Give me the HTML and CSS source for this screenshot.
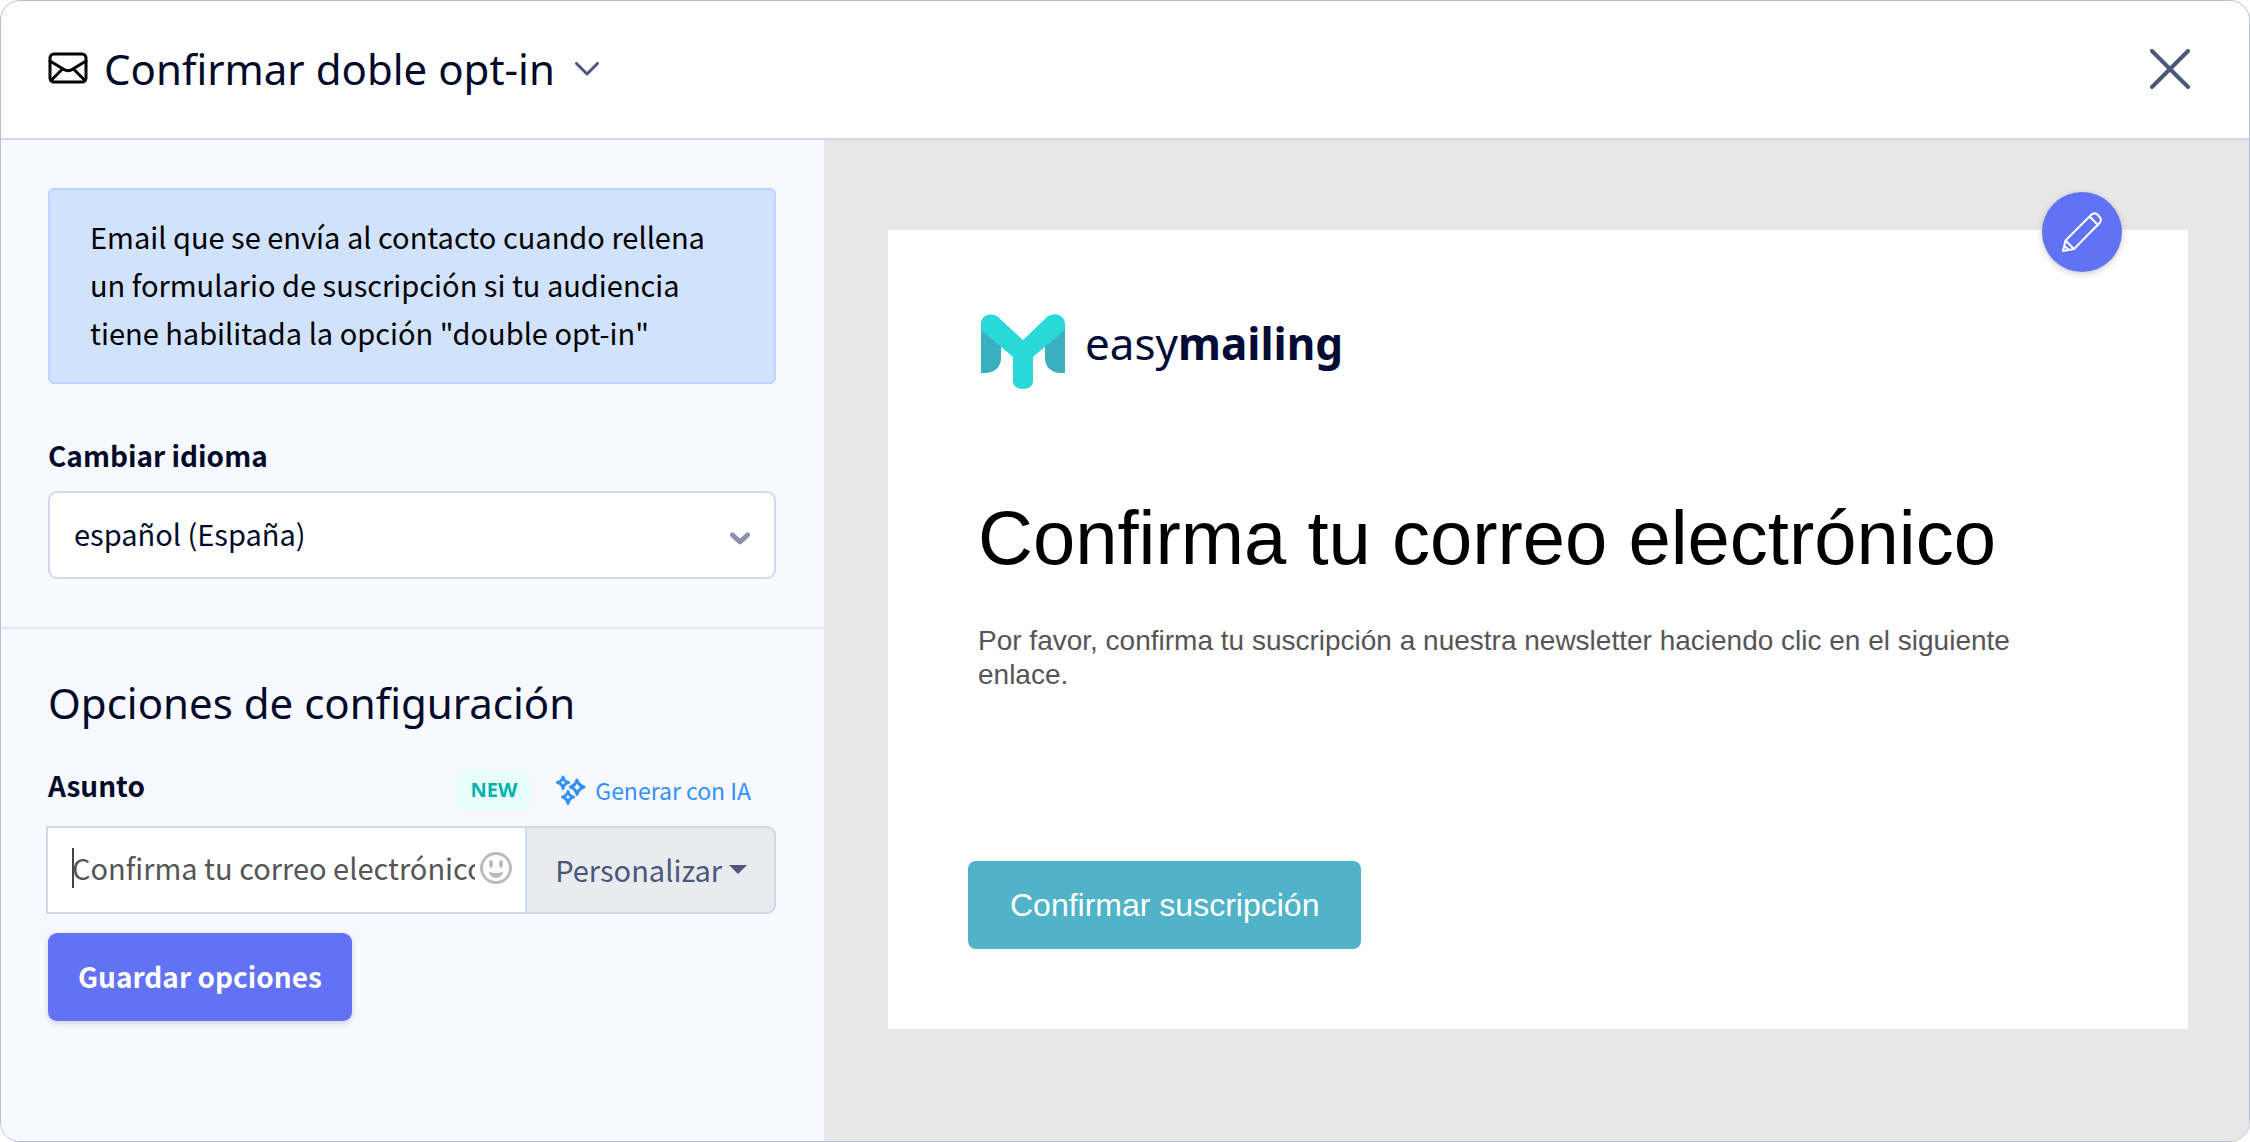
FILE: index.html
```html
<!DOCTYPE html>
<html lang="es">
<head>
<meta charset="utf-8">
<meta name="viewport" content="width=device-width, initial-scale=1">
<title>Confirmar doble opt-in</title>
<link rel="stylesheet" href="styles.css">
</head>
<body>
<div class="editor">
  <header class="topbar">
    <button class="title-menu" type="button" aria-haspopup="true">
      <svg class="icon-mail" viewBox="0 0 40 32" aria-hidden="true"><rect x="2" y="2" width="36" height="28" rx="4"/><path d="M2 9L16 17.500q4 2.500 8 0L38 9M3 28.500L14.500 17M37 28.500L25.500 17"/></svg>
      <span class="title-text">Confirmar doble opt-in</span>
      <svg class="icon-chevron" viewBox="0 0 24 14" aria-hidden="true"><path d="M1.500 1.500L12 12L22.500 1.500"/></svg>
    </button>
    <button class="close" type="button" aria-label="Cerrar">
      <svg viewBox="0 0 40 40" aria-hidden="true"><path d="M2 2L38 38M38 2L2 38"/></svg>
    </button>
  </header>

  <main class="columns">
    <aside class="sidebar">
      <section class="panel">
        <p class="notice">Email que se envía al contacto cuando rellena un formulario de suscripción si tu audiencia tiene habilitada la opción "double opt-in"</p>
        <label class="label" for="language">Cambiar idioma</label>
        <div class="select-box">
          <select id="language" class="select"><option>español (España)</option></select>
          <svg class="select-arrow" viewBox="0 0 20 13" aria-hidden="true"><path d="M2.500 3L10 10L17.500 3"/></svg>
        </div>
      </section>

      <section class="panel">
        <h2 class="heading">Opciones de configuración</h2>
        <div class="subject-row">
          <label class="label" for="subject">Asunto</label>
          <span class="badge">NEW</span>
          <a class="ai-link" href="#">
            <svg class="icon-sparkles" viewBox="0 0 30 30" aria-hidden="true"><path d="M7 2Q8 6.500 12.500 7.500Q8 8.500 7 13.500Q6 8.500 1.500 7.500Q6 6.500 7 2ZM21 5Q22.500 10.500 28 12Q22.500 13.500 21 19.500Q19.500 13.500 14.500 12Q19.500 10.500 21 5ZM12 16.500Q13 21 17.500 22Q13 23 12 28.500Q11 23 6.500 22Q11 21 12 16.500Z"/></svg>
            Generar con IA
          </a>
        </div>
        <div class="input-group">
          <div class="subject-field">
            <input id="subject" class="subject-input" type="text" value="Confirma tu correo electrónico">
            <span class="caret"></span>
            <button class="emoji" type="button" aria-label="Insertar emoji">
              <svg viewBox="0 0 34 34" aria-hidden="true"><circle class="face" cx="17" cy="17" r="14.500"/><ellipse cx="12" cy="13" rx="2" ry="4"/><ellipse cx="22" cy="13" rx="2" ry="4"/><path d="M9.500 20.500q7.500 3 15 0q-2 6.500-7.500 6.500t-7.500-6.500z"/></svg>
            </button>
          </div>
          <button class="personalize" type="button">Personalizar<span class="triangle"></span></button>
        </div>
        <button class="save" type="button">Guardar opciones</button>
      </section>
    </aside>

    <section class="preview">
      <article class="email">
        <button class="edit" type="button" aria-label="Editar">
          <svg viewBox="0 0 40 40" aria-hidden="true"><path d="M1 39L3.500 28.500L29 3Q32 0 35.500 2.500L38 5.500Q40 8 37.500 11L12 37ZM27.500 4.500L36 13M3.500 28.500L12 37M2.500 34L6.500 37.500"/></svg>
        </button>
        <div class="brand">
          <svg class="brand-mark" viewBox="0 0 84 75" aria-hidden="true">
            <path fill="#39afbf" d="M0 10L20 24V45Q19 57 6 59H0ZM84 10L64 24V45Q65 57 78 59H84Z"/>
            <path fill="#2ad8d8" d="M0 16V10C0 1 10-2 17 3L42 26L66 3C73-3 84 1 84 10V16L52 43V68Q51 75 42 75T32 68V43Z"/>
          </svg>
          <span class="brand-name">easy<b>mailing</b></span>
        </div>
        <h1 class="email-title">Confirma tu correo electrónico</h1>
        <p class="email-text">Por favor, confirma tu suscripción a nuestra newsletter haciendo clic en el siguiente enlace.</p>
        <a class="confirm" href="#">Confirmar suscripción</a>
      </article>
    </section>
  </main>
</div>
</body>
</html>
```
FILE: styles.css
```css
* { box-sizing: border-box; }

body {
  margin: 0;
  background: #fff;
  color: #000b2b;
  font-family: "Noto Sans CJK SC", "Noto Sans", sans-serif;
  font-size: 29px;
  line-height: 48px;
}

button, input, select { font: inherit; color: inherit; }
button { padding: 0; border: 0; background: none; cursor: pointer; }
svg { display: block; fill: none; stroke-linecap: round; stroke-linejoin: round; }

.editor {
  display: flex;
  flex-direction: column;
  min-height: 100vh;
  border: 1px solid #b9bed8;
  border-radius: 20px;
  overflow: hidden;
}

.topbar {
  display: flex;
  align-items: center;
  justify-content: space-between;
  height: 139px;
  padding: 0 59px 1px 47px;
  border-bottom: 2px solid #d4d7e8;
}
.title-menu { display: flex; align-items: center; gap: 16px; }
.title-text { font: 42px/54px "Noto Sans", sans-serif; }
.icon-mail { width: 40px; height: 32px; margin-bottom: 3px; stroke: #000; stroke-width: 3; }
.icon-chevron { width: 24px; height: 14px; margin-left: 4px; stroke: #4c577c; stroke-width: 3; }
.close svg { width: 40px; height: 40px; stroke: #4c577c; stroke-width: 4; }

.columns {
  display: grid;
  grid-template-columns: minmax(0, 824fr) minmax(0, 1424fr);
  flex: 1;
}

.sidebar { background: #f8f9fe; border-right: 1px solid #e3e8f1; }
.panel { padding: 48px 48px 48px 47px; }
.panel + .panel { border-top: 2px solid #e3eaf5; }

.notice {
  margin: 0 0 47px;
  padding: 22px 40px 26px;
  border: 2px solid #bbd6fc;
  border-radius: 6px;
  background: #d1e2fc;
  color: #000;
}
.label { display: block; font-size: 28px; font-weight: 600; }

.select-box { display: grid; align-items: center; margin-top: 12px; }
.select-box > * { grid-area: 1 / 1; }
.select {
  width: 100%;
  height: 88px;
  padding: 0 24px 4px;
  border: 2px solid #d4d7e8;
  border-radius: 9px;
  background: #fff;
  appearance: none;
}
.select-arrow {
  justify-self: end;
  width: 20px;
  height: 13px;
  margin: 6px 26px 0 0;
  stroke: #8a90ad;
  stroke-width: 5;
  pointer-events: none;
}

.heading { margin: 0 0 32px; font: 42px/52px "Noto Sans", sans-serif; }

.subject-row { display: flex; align-items: flex-end; height: 49px; }
.subject-row .label { align-self: flex-start; margin-right: auto; }
.badge {
  padding: 0 13px;
  border-radius: 6px;
  background: #e9fffe;
  color: #00b2ae;
  font: 700 20px/40px "Noto Sans", sans-serif;
}
.ai-link {
  display: flex;
  align-items: center;
  gap: 9px;
  margin: 0 25px 0 26px;
  color: #3390fb;
  font-size: 23px;
  line-height: 40px;
  text-decoration: none;
}
.icon-sparkles { width: 30px; height: 30px; stroke: currentColor; stroke-width: 3; }

.input-group { display: flex; margin: 16px 0 19px -2px; }
.subject-field { position: relative; flex: 1; min-width: 0; }
.subject-input {
  width: 100%;
  height: 88px;
  padding: 0 50px 6px 24px;
  border: 2px solid #d4d7e8;
  border-radius: 0;
  background: #fff;
  color: #555;
}
.caret { position: absolute; left: 26px; top: 22px; width: 2px; height: 40px; background: #444; }
.emoji { position: absolute; right: 14px; top: 25px; }
.emoji svg { width: 34px; height: 34px; fill: #bbb; }
.emoji .face { fill: none; stroke: #bbb; stroke-width: 3; }
.personalize {
  display: flex;
  align-items: center;
  gap: 7px;
  margin-left: -2px;
  padding: 0 27px 2px 28px;
  border: 2px solid #d4d7e8;
  border-radius: 0 9px 9px 0;
  background: #e8ecef;
  color: #4c577c;
}
.triangle { border: 9px solid transparent; border-top-color: currentColor; border-bottom: 0; }

.save {
  height: 88px;
  padding: 0 30px 2px;
  border-radius: 9px;
  background: #6173f4;
  box-shadow: 0 2px 6px rgba(0, 0, 0, .16);
  color: #fff;
  font-size: 28px;
  font-weight: 600;
}

.preview { padding: 90px 61px 112px 63px; background: #e7e7e7; }
.email {
  position: relative;
  min-height: 799px;
  padding: 84px 90px 80px;
  background: #fff;
  font-family: "Liberation Sans", Arial, sans-serif;
}
.edit {
  position: absolute;
  top: -38px;
  right: 66px;
  display: grid;
  place-items: center;
  width: 80px;
  height: 80px;
  border-radius: 50%;
  background: #6173f4;
  box-shadow: 0 2px 6px rgba(0, 0, 0, .2);
}
.edit svg { width: 40px; height: 40px; stroke: #fff; stroke-width: 2; }

.brand { display: flex; align-items: flex-start; gap: 20px; margin-left: 3px; }
.brand-mark { width: 84px; height: 75px; }
.brand-name { color: #000b36; font: 44px/58px "Noto Sans", sans-serif; }

.email-title { margin: 104px 0 0; color: #000; font-size: 76px; font-weight: 400; line-height: 90px; }
.email-text { margin: 41px 0 0; color: #555; font-size: 28px; line-height: 34px; }
.confirm {
  display: inline-block;
  margin: 169px 0 0 -10px;
  padding: 0 42px;
  border-radius: 8px;
  background: #51b3c8;
  color: #fff;
  font-size: 32px;
  line-height: 88px;
  text-decoration: none;
}
```
